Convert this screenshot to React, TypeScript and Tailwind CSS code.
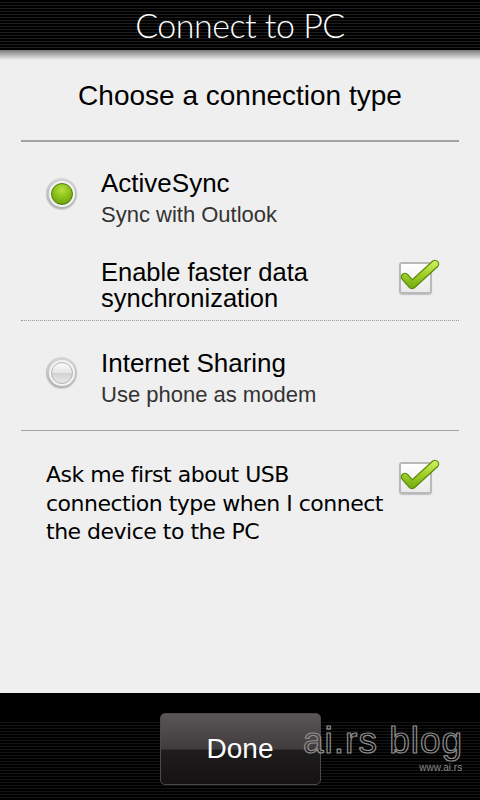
import React from 'react';

const helv = { fontFamily: '"Liberation Sans", Arial, sans-serif' };

function Radio({ on }: { on: boolean }) {
  return (
    <div className="flex h-[31px] w-[31px] shrink-0 items-center justify-center rounded-full bg-[linear-gradient(180deg,#d6d6d6,#b2b2b2)] shadow-[0_1px_1px_rgba(0,0,0,0.15)]">
      <div className="flex h-[26px] w-[26px] items-center justify-center rounded-full bg-[#f4f4f4]">
        {on ? (
          <div className="h-[22px] w-[22px] rounded-full border border-[#4c7a08] bg-[radial-gradient(circle_at_50%_30%,#b8e040_0%,#8cc218_45%,#5f950a_100%)]" />
        ) : (
          <div className="h-[22px] w-[22px] rounded-full border border-[#b4b4b4] bg-[linear-gradient(180deg,#fbfbfb_0%,#e4e4e4_50%,#d2d2d2_52%,#e8e8e8_100%)]" />
        )}
      </div>
    </div>
  );
}

function Check() {
  return (
    <div className="relative h-[32px] w-[33px] shrink-0">
      <div className="absolute inset-0 rounded-[3px] border-[2px] border-[#b9b9b9] bg-[linear-gradient(180deg,#ffffff,#e9e9e9)] shadow-[0_1px_1px_rgba(0,0,0,0.2)]" />
      <svg className="absolute left-0 top-[-2px] overflow-visible" width="42" height="34" viewBox="0 0 42 34">
        <defs>
          <linearGradient id="g" gradientUnits="userSpaceOnUse" x1="0" y1="2" x2="0" y2="30">
            <stop offset="0" stopColor="#cdee5a" />
            <stop offset="0.5" stopColor="#9ccc22" />
            <stop offset="1" stopColor="#6aa40e" />
          </linearGradient>
        </defs>
        <path d="M6 17 L13 25 L36 4" fill="none" stroke="#5b8c0c" strokeWidth="8.5" strokeLinecap="round" strokeLinejoin="round" />
        <path d="M6 17 L13 25 L36 4" fill="none" stroke="url(#g)" strokeWidth="6" strokeLinecap="round" strokeLinejoin="round" />
      </svg>
    </div>
  );
}

export default function App() {
  return (
    <div className="flex h-[800px] w-[480px] flex-col overflow-hidden bg-[#efefef]">
      {/* title bar */}
      <div className="flex h-[50px] shrink-0 items-center justify-center bg-[repeating-linear-gradient(180deg,#000_0px,#000_2px,#1c1c1c_2px,#1c1c1c_3px)]">
        <span
          className="text-[34px] font-light leading-none tracking-[-0.5px] text-white"
          style={{ fontFamily: 'Lato, Inter, sans-serif' }}
        >
          Connect to PC
        </span>
      </div>
      <div className="h-[10px] shrink-0 bg-[linear-gradient(180deg,#7a7a7a,#efefef)]" />

      <div className="flex flex-1 flex-col px-[21px]" style={helv}>
        <div className="mt-[20px] text-center text-[28px] leading-[32px] text-black">Choose a connection type</div>
        <div className="mt-[28px] h-[2px] bg-[#a3a3a3]" />

        {/* ActiveSync */}
        <div className="mt-[27px] flex items-start gap-[24px] pl-[25px]">
          <div className="mt-[9px]">
            <Radio on />
          </div>
          <div>
            <div className="text-[26px] leading-[28px] text-black">ActiveSync</div>
            <div className="mt-[6px] text-[22px] leading-[24px] text-[#333]">Sync with Outlook</div>
          </div>
        </div>

        <div className="mt-[32px] flex items-start justify-between pl-[80px] pr-[27px]">
          <div className="text-[25.5px] leading-[26px] text-black">
            Enable faster data
            <br />
            synchronization
          </div>
          <div className="mt-[3px]">
            <Check />
          </div>
        </div>

        <div className="mt-[9px] border-t border-dotted border-[#9a9a9a]" />

        {/* Internet sharing */}
        <div className="mt-[28px] flex items-start gap-[24px] pl-[25px]">
          <div className="mt-[8px]">
            <Radio on={false} />
          </div>
          <div>
            <div className="text-[26px] leading-[28px] text-black">Internet Sharing</div>
            <div className="mt-[6px] text-[22px] leading-[24px] text-[#333]">Use phone as modem</div>
          </div>
        </div>

        <div className="mt-[23px] h-[1px] bg-[#a3a3a3]" />

        <div className="mt-[30px] flex items-start justify-between pl-[25px] pr-[27px]">
          <div
            className="text-[22px] leading-[28.5px] text-black"
            style={{ fontFamily: '"DejaVu Sans", Tahoma, sans-serif', letterSpacing: '-0.5px' }}
          >
            Ask me first about USB
            <br />
            connection type when I connect
            <br />
            the device to the PC
          </div>
          <div className="mt-[1px]">
            <Check />
          </div>
        </div>
      </div>

      {/* bottom bar */}
      <div className="relative flex h-[107px] shrink-0 items-start justify-center bg-[repeating-linear-gradient(180deg,#000_0px,#000_2px,#141414_2px,#141414_3px)] pt-[20px]">
        <div className="absolute inset-x-0 top-0 h-[28px] bg-black" />
        <button
          className="relative z-10 flex h-[72px] w-[161px] items-center justify-center rounded-[5px] border border-[#4a4a4a] bg-[linear-gradient(180deg,#5a5657_0%,#403c3d_50%,#1e1c1d_52%,#141213_100%)] text-[28px] text-white"
          style={helv}
        >
          Done
        </button>
        <div className="absolute left-[303px] top-[29px] z-20 flex flex-col items-end whitespace-nowrap">
          <span
            className="text-[37px] leading-[37px] tracking-[1px] text-transparent [-webkit-text-stroke:1.2px_#8e8e8e]"
            style={helv}
          >
            ai.rs blog
          </span>
          <span className="mr-[1px] mt-[3px] text-[10px] leading-[12px] text-[#8a8a8a]" style={helv}>
            www.ai.rs
          </span>
        </div>
      </div>
    </div>
  );
}
